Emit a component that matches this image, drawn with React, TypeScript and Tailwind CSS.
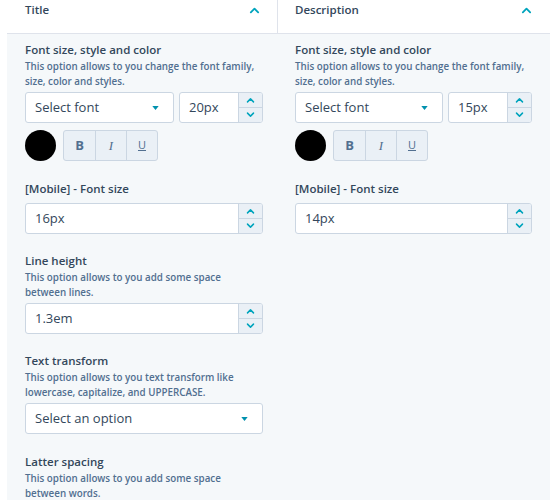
import React from 'react';

const ChevronUp = ({ className = '' }: { className?: string }) => (
  <svg viewBox="0 0 12 8" className={className} fill="none">
    <path d="M2 6.5 6 2.5l4 4" stroke="currentColor" strokeWidth="2" strokeLinecap="round" strokeLinejoin="round" />
  </svg>
);

const ChevronDown = ({ className = '' }: { className?: string }) => (
  <svg viewBox="0 0 12 8" className={className} fill="none">
    <path d="M2 1.5 6 5.5l4-4" stroke="currentColor" strokeWidth="2" strokeLinecap="round" strokeLinejoin="round" />
  </svg>
);

const Caret = () => (
  <svg viewBox="0 0 8 5" className="w-[7px] h-[4px] text-[#0091ae]">
    <path d="M0 0h8L4 5z" fill="currentColor" />
  </svg>
);

const Stepper = () => (
  <div className="w-[24px] flex flex-col border-l border-[#cbd6e2] bg-[#eaf0f6]">
    <div className="flex-1 flex items-center justify-center border-b border-[#cbd6e2]">
      <ChevronUp className="w-[9px] h-[6px] text-[#00a4bd]" />
    </div>
    <div className="flex-1 flex items-center justify-center">
      <ChevronDown className="w-[9px] h-[6px] text-[#00a4bd]" />
    </div>
  </div>
);

const NumberInput = ({ value, className = '' }: { value: string; className?: string }) => (
  <div className={`flex h-[31px] bg-white border border-[#cbd6e2] rounded-[3px] overflow-hidden ${className}`}>
    <div className="flex-1 flex items-center pl-[9px] text-[13px] text-[#33475b]">{value}</div>
    <Stepper />
  </div>
);

const SelectBox = ({ label, className = '' }: { label: string; className?: string }) => (
  <div className={`flex items-center justify-between h-[31px] bg-white border border-[#cbd6e2] rounded-[3px] pl-[9px] pr-[14px] ${className}`}>
    <span className="text-[13px] text-[#33475b]">{label}</span>
    <Caret />
  </div>
);

const Label = ({ children }: { children: React.ReactNode }) => (
  <div className="text-[11.5px] font-semibold text-[#33475b] leading-[14px]">{children}</div>
);

const Help = ({ children }: { children: React.ReactNode }) => (
  <div className="text-[9.8px] font-semibold text-[#516f90] leading-[14.5px] mt-[3px] mb-[3px]">{children}</div>
);

const StyleRow = () => (
  <div className="flex items-center gap-[7px] mt-[7px]">
    <div className="w-[31px] h-[31px] rounded-full bg-black" />
    <div className="flex h-[31px] border border-[#cbd6e2] rounded-[3px] overflow-hidden bg-[#eaf0f6] text-[#516f90]">
      <div className="w-[31px] flex items-center justify-center font-bold text-[13px]">B</div>
      <div className="w-[31px] flex items-center justify-center border-l border-[#cbd6e2] italic text-[13px] font-['Liberation_Serif',serif]">I</div>
      <div className="w-[31px] flex items-center justify-center border-l border-[#cbd6e2] underline text-[11px]">U</div>
    </div>
  </div>
);

const FontBlock = ({ size }: { size: string }) => (
  <div>
    <Label>Font size, style and color</Label>
    <Help>
      This option allows to you change the font family,
      <br />
      size, color and styles.
    </Help>
    <div className="flex gap-[5px]">
      <SelectBox label="Select font" className="flex-1" />
      <NumberInput value={size} className="w-[84px]" />
    </div>
    <StyleRow />
  </div>
);

const Header = ({ title }: { title: string }) => (
  <div className="h-[33px] flex items-start justify-between pt-[1px]">
    <span className="text-[11.5px] font-semibold text-[#33475b]">{title}</span>
    <ChevronUp className="w-[11px] h-[8px] mt-[5px] text-[#00a4bd]" />
  </div>
);

export default function App() {
  return (
    <div className="w-[550px] h-[500px] bg-white flex overflow-hidden font-['Open_Sans',sans-serif]">
      {/* Title column */}
      <div className="w-[278px] flex flex-col">
        <div className="pl-[18px] pr-[17px] ml-[7px] border-r border-b border-[#dfe3eb] bg-white">
          <Header title="Title" />
        </div>
        <div className="ml-[7px] mb-[3px] flex-1 bg-[#f5f8fa] pl-[18px] pr-[15px] pt-[9px]">
          <FontBlock size="20px" />
          <div className="mt-[21px]">
            <Label>[Mobile] - Font size</Label>
            <NumberInput value="16px" className="mt-[7px]" />
          </div>
          <div className="mt-[20px]">
            <Label>Line height</Label>
            <Help>
              This option allows to you add some space
              <br />
              between lines.
            </Help>
            <NumberInput value="1.3em" />
          </div>
          <div className="mt-[20px]">
            <Label>Text transform</Label>
            <Help>
              This option allows to you text transform like
              <br />
              lowercase, capitalize, and UPPERCASE.
            </Help>
            <SelectBox label="Select an option" />
          </div>
          <div className="mt-[21px]">
            <Label>Latter spacing</Label>
            <Help>
              This option allows to you add some space
              <br />
              between words.
            </Help>
          </div>
        </div>
      </div>

      {/* Description column */}
      <div className="flex-1 flex flex-col">
        <div className="pl-[17px] pr-[18px] border-b border-[#dfe3eb] bg-white">
          <Header title="Description" />
        </div>
        <div className="flex-1 bg-[#f5f8fa] pl-[17px] pr-[18px] pt-[9px]">
          <FontBlock size="15px" />
          <div className="mt-[21px]">
            <Label>[Mobile] - Font size</Label>
            <NumberInput value="14px" className="mt-[7px]" />
          </div>
        </div>
      </div>
    </div>
  );
}
